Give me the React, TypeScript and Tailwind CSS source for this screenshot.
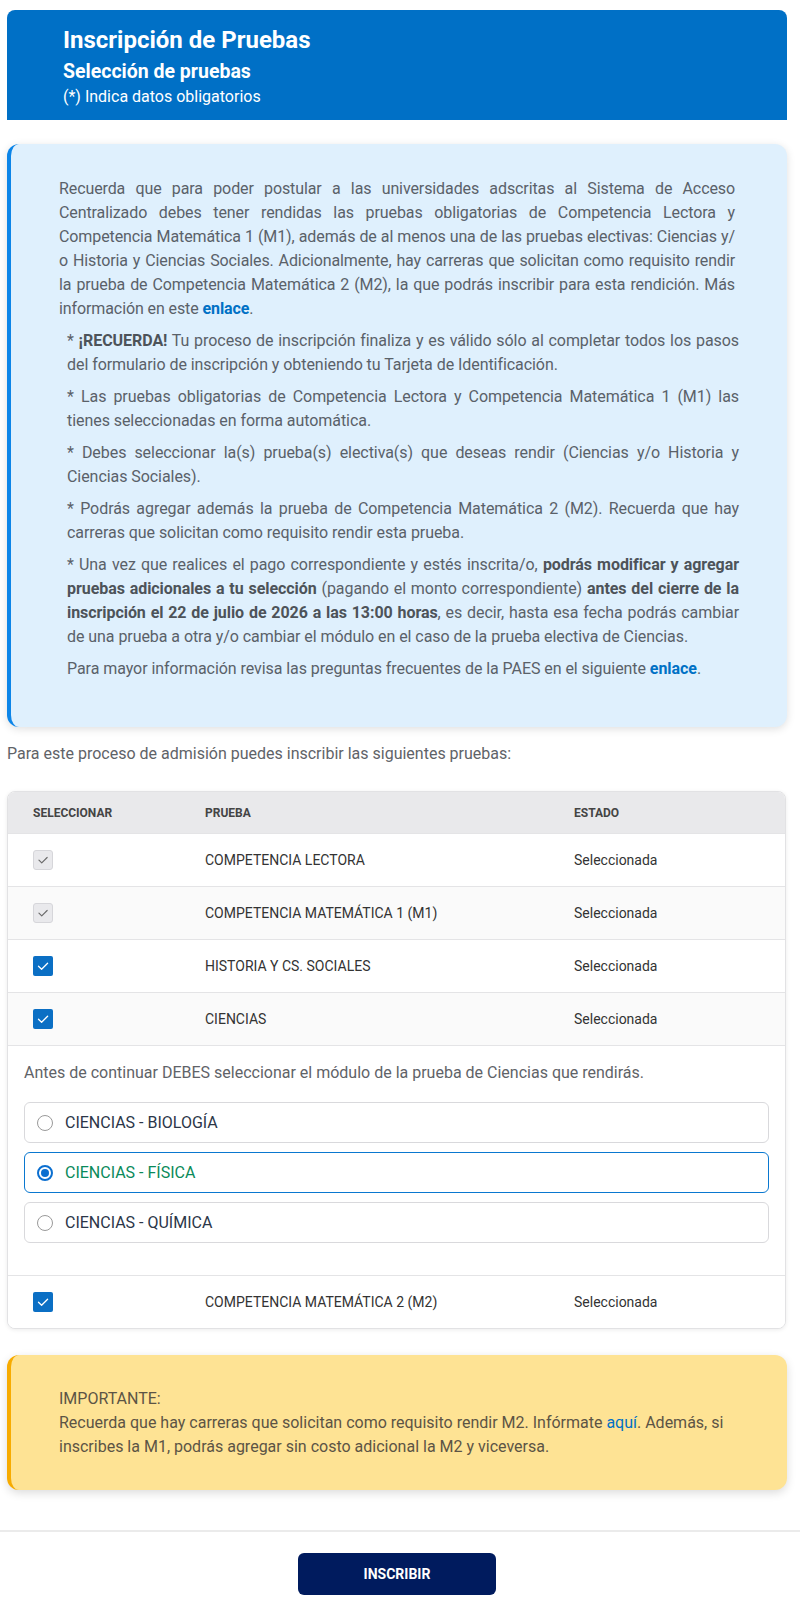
import React from "react";

const font = { fontFamily: "Roboto, 'Liberation Sans', sans-serif" };

function Check({ light }: { light?: boolean }) {
  return (
    <svg viewBox="0 0 20 20" className="w-[20px] h-[20px]" fill="none">
      <polyline
        points="5.5 10.2 8.6 13.2 14.6 7.2"
        stroke={light ? "#ffffff" : "#6b6b6b"}
        strokeWidth="1.3"
        strokeLinecap="round"
        strokeLinejoin="round"
      />
    </svg>
  );
}

function Box({ kind }: { kind: "locked" | "on" }) {
  if (kind === "locked") {
    return (
      <div className="w-[20px] h-[20px] rounded-[3px] bg-[#e9e9ec] border border-[#d6d6da] flex items-center justify-center">
        <Check />
      </div>
    );
  }
  return (
    <div className="w-[20px] h-[20px] rounded-[2px] bg-[#0b6fc4] flex items-center justify-center">
      <Check light />
    </div>
  );
}

function Row({
  name,
  kind,
  shade,
}: {
  name: string;
  kind: "locked" | "on";
  shade?: boolean;
}) {
  return (
    <div
      className={`grid grid-cols-[171px_369px_1fr] h-[53px] items-center border-t border-[#e4e4e6] ${
        shade ? "bg-[#fafafa]" : "bg-white"
      }`}
    >
      <div className="pl-[25px]">
        <Box kind={kind} />
      </div>
      <div className="pl-[26px] text-[14px] text-[#333333]">{name}</div>
      <div className="pl-[26px] text-[14px] text-[#333333]">Seleccionada</div>
    </div>
  );
}

function Option({ label, active }: { label: string; active?: boolean }) {
  return (
    <div
      className={`h-[41px] rounded-[6px] bg-white flex items-center pl-[12px] gap-[12px] border ${
        active ? "border-[#0a78d0]" : "border-[#d9d9dc]"
      }`}
    >
      {active ? (
        <div className="w-[16px] h-[16px] rounded-full border-2 border-[#0b6fd0] flex items-center justify-center">
          <div className="w-[8px] h-[8px] rounded-full bg-[#0b6fd0]" />
        </div>
      ) : (
        <div className="w-[16px] h-[16px] rounded-full border border-[#9a9a9a] bg-white" />
      )}
      <span
        className={`text-[16px] ${active ? "text-[#0a8a5a]" : "text-[#2b3648]"}`}
      >
        {label}
      </span>
    </div>
  );
}

export default function App() {
  return (
    <div style={font} className="w-[800px] bg-white">
      <div className="pl-[7px] pr-[13px] pt-[10px]">
        {/* page title band */}
        <div className="bg-[#0070c6] rounded-t-[8px] pl-[56px] pt-[16px] pb-[13px] text-white">
          <h1 className="text-[24px] leading-[28px] font-bold">
            Inscripción de Pruebas
          </h1>
          <h2 className="mt-[6px] text-[19.5px] leading-[24px] font-bold">
            Selección de pruebas
          </h2>
          <p className="mt-[3px] text-[16px] leading-[20px]">
            (*) Indica datos obligatorios
          </p>
        </div>

        {/* information notice */}
        <div className="mt-[24px] rounded-[12px] bg-[#dff0fd] border-l-4 border-[#0c85e8] shadow-[0_2px_8px_rgba(0,0,0,0.13)] pl-[48px] pr-[48px] pt-[33px] pb-[46px] text-[16px] leading-[24px] tracking-[-0.06px] text-[#5a6169] text-justify">
          <p className="pr-[4px] tracking-[-0.1px]">
            Recuerda que para poder postular a las universidades adscritas al
            Sistema de Acceso Centralizado debes tener rendidas las pruebas
            obligatorias de Competencia Lectora y Competencia Matemática 1
            (M1), además de al menos una de las pruebas electivas: Ciencias
            y/<wbr />o Historia y Ciencias Sociales. Adicionalmente, hay
            carreras que solicitan como requisito rendir la prueba de
            Competencia Matemática 2 (M2), la que podrás inscribir para esta
            rendición. Más información en este{" "}
            <a className="font-bold text-[#0071c5]">enlace</a>.
          </p>
          <div className="pl-[8px] flex flex-col gap-[8px] mt-[8px]">
            <p>
              * <b className="text-[#4d5359]">¡RECUERDA!</b> Tu proceso de
              inscripción finaliza y es válido sólo al completar todos los pasos
              del formulario de inscripción y obteniendo tu Tarjeta de
              Identificación.
            </p>
            <p>
              * Las pruebas obligatorias de Competencia Lectora y Competencia
              Matemática 1 (M1) las tienes seleccionadas en forma automática.
            </p>
            <p>
              * Debes seleccionar la(s) prueba(s) electiva(s) que deseas rendir
              (Ciencias y/o Historia y Ciencias Sociales).
            </p>
            <p>
              * Podrás agregar además la prueba de Competencia Matemática 2 (M2).
              Recuerda que hay carreras que solicitan como requisito rendir esta
              prueba.
            </p>
            <p>
              * Una vez que realices el pago correspondiente y estés
              inscrita/o,{" "}
              <b className="text-[#4d5359]">
                podrás modificar y agregar pruebas adicionales a tu selección
              </b>{" "}
              (pagando el monto correspondiente){" "}
              <b className="text-[#4d5359]">
                antes del cierre de la inscripción el 22 de julio de 2026 a las
                13:00 horas
              </b>
              , es decir, hasta esa fecha podrás cambiar de una prueba a otra
              y/o cambiar el módulo en el caso de la prueba electiva de
              Ciencias.
            </p>
            <p>
              Para mayor información revisa las preguntas frecuentes de la PAES
              en el siguiente{" "}
              <a className="font-bold text-[#0071c5]">enlace</a>.
            </p>
          </div>
        </div>

        <p className="mt-[15px] text-[16px] leading-[24px] text-[#5f6368]">
          Para este proceso de admisión puedes inscribir las siguientes pruebas:
        </p>

        {/* test selection table */}
        <div className="mt-[25px] w-[779px] rounded-[8px] border border-[#e2e2e4] shadow-[0_1px_4px_rgba(0,0,0,0.08)] overflow-hidden bg-white">
          <div className="grid grid-cols-[171px_369px_1fr] h-[41px] items-center bg-[#e9e9eb] text-[12px] font-bold text-[#444444]">
            <div className="pl-[25px]">SELECCIONAR</div>
            <div className="pl-[26px]">PRUEBA</div>
            <div className="pl-[26px]">ESTADO</div>
          </div>
          <Row name="COMPETENCIA LECTORA" kind="locked" />
          <Row name="COMPETENCIA MATEMÁTICA 1 (M1)" kind="locked" shade />
          <Row name="HISTORIA Y CS. SOCIALES" kind="on" />
          <Row name="CIENCIAS" kind="on" shade />

          <div className="border-t border-[#e4e4e6] px-[16px] pt-[15px] pb-[32px]">
            <p className="text-[16px] leading-[24px] text-[#5f6368]">
              Antes de continuar DEBES seleccionar el módulo de la prueba de
              Ciencias que rendirás.
            </p>
            <div className="mt-[17px] flex flex-col gap-[9px]">
              <Option label="CIENCIAS - BIOLOGÍA" />
              <Option label="CIENCIAS - FÍSICA" active />
              <Option label="CIENCIAS - QUÍMICA" />
            </div>
          </div>

          <Row name="COMPETENCIA MATEMÁTICA 2 (M2)" kind="on" />
        </div>

        {/* important notice */}
        <div className="mt-[26px] rounded-[12px] bg-[#fee394] border-l-4 border-[#f7ab00] shadow-[0_3px_10px_rgba(0,0,0,0.14)] pl-[48px] pr-[48px] pt-[32px] pb-[31px] text-[16px] leading-[24px] text-[#5c5445]">
          <p>IMPORTANTE:</p>
          <p>
            Recuerda que hay carreras que solicitan como requisito rendir M2.
            Infórmate <a className="text-[#0071c5]">aquí</a>. Además, si
            inscribes la M1, podrás agregar sin costo adicional la M2 y
            viceversa.
          </p>
        </div>
      </div>

      <div className="mt-[40px] h-[2px] bg-[#ebebeb]" />

      <div className="pl-[7px] pr-[13px] pt-[21px] pb-[16px] flex justify-center">
        <button className="w-[198px] h-[42px] rounded-[6px] bg-[#001b5e] text-white text-[14px] font-bold">
          INSCRIBIR
        </button>
      </div>
    </div>
  );
}
